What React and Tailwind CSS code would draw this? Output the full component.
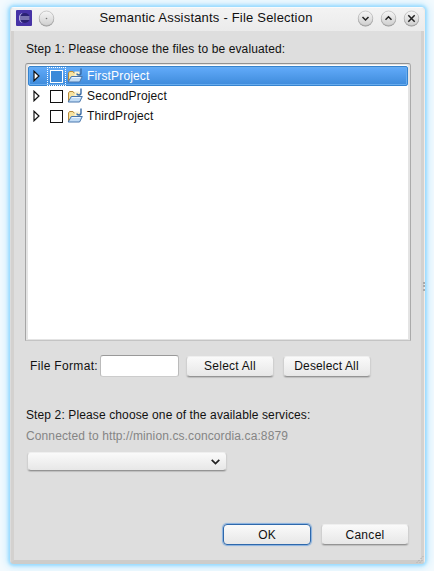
import React from 'react';

const buttonBase =
  'flex h-[21px] w-[88px] shrink-0 items-center justify-center rounded-[4px] border bg-gradient-to-b from-[#fafafa] to-[#e7e7e7]';
const plainButton = 'border-[#d0d0d0] border-t-[#efefef] border-b-[#949494] shadow-[0_1px_1px_#bdbdbd]';

function RoundButton({ d, dot }) {
  return (
    <svg width="17" height="17" viewBox="0 0 17 17" className="shrink-0">
      <defs>
        <linearGradient id="round" x1="0" y1="0" x2="0" y2="1">
          <stop offset="0" stopColor="#f6f6f6" />
          <stop offset="1" stopColor="#cfcfcf" />
        </linearGradient>
      </defs>
      <circle cx="8.5" cy="9" r="7.5" fill="#969696" />
      <circle cx="8.5" cy="8.3" r="7.3" fill="url(#round)" stroke="#b0b0b0" strokeWidth="0.6" />
      {dot ? <circle cx="8.5" cy="8.5" r="0.8" fill="#777" /> : <path d={d} fill="none" stroke="#222" strokeWidth="1.5" />}
    </svg>
  );
}

function AppLogo() {
  return (
    <svg width="16" height="16" viewBox="0 0 16 16" className="shrink-0">
      <rect width="16" height="16" rx="1" fill="#4733a6" />
      <path d="M6.5 3a5.3 5.3 0 0 0 0 10a8 8 0 0 1 0-10z" fill="#c3bfe8" />
      <circle cx="8.8" cy="8" r="5" fill="#2a2173" />
      <path d="M4 7h9.5M4 9h9.5" stroke="#c9c5ee" strokeWidth="1.1" />
    </svg>
  );
}

function Folder() {
  return (
    <svg width="16" height="16" viewBox="0 0 16 16" className="shrink-0">
      <path d="M1.5 13.5V5l1-1.5h3.5l1 1.5h5v4" fill="#f7e3a0" stroke="#b58a3c" />
      <path d="M7.5 3.5h5v4.5h-5z" fill="#fbf3d2" />
      <path d="M14 .5v4.5q0 2-2 2t-2-1.5" fill="none" stroke="#396ba5" strokeWidth="1.4" />
      <path d="M1.2 14L4.3 8.5h11L12.6 14z" fill="#c2dcf5" stroke="#4876ad" />
      <path d="M5 9.5h8.5" stroke="#edf6ff" />
    </svg>
  );
}

function Row({ name, selected }) {
  return (
    <div
      className={`flex h-5 items-center ${
        selected
          ? 'rounded-[2px] border border-[#3583cf] bg-gradient-to-b from-[#62abfa] to-[#3e8bdb] text-white shadow-[inset_0_0_0_1px_#68acef]'
          : 'border border-transparent text-[#111]'
      }`}
    >
      <svg width="8" height="12" viewBox="0 0 8 12" className="ml-1 shrink-0">
        <path d="M1 1.2v9.6L6 6z" fill="#fff" stroke="#111" strokeWidth="1.2" />
      </svg>
      <div
        className={`ml-[6px] flex h-[19px] w-[19px] shrink-0 items-center justify-center ${
          selected ? 'border border-dotted border-white' : ''
        }`}
      >
        <div className={`h-[13px] w-[13px] border ${selected ? 'border-white bg-[#3c8ad9]' : 'border-[#111] bg-white'}`} />
      </div>
      <div className="ml-px flex">
        <Folder />
      </div>
      <span className="ml-[4px] tracking-[0.15px]">{name}</span>
    </div>
  );
}

export default function App() {
  return (
    <div className="h-[571px] w-[434px] overflow-hidden bg-[#f3fafe] pt-[7px] pl-[10px] font-['Liberation_Sans',Arial,sans-serif] text-[12px] leading-[14px] whitespace-nowrap text-[#111]">
      <div className="relative flex h-[557px] w-[415px] flex-col rounded-[4px] border border-t-[#fbfbfb] border-r-[#f3ece7] border-b-[#cdccca] border-l-[#dcdcdc] bg-[#dedede] shadow-[0_0_3px_2px_#9bdcff,0_0_9px_3px_#c5eaff]">
        <div className="flex h-[23px] shrink-0 items-center rounded-t-[3px] bg-gradient-to-b from-[#f3f3f3] to-[#ebebeb] pr-[4px] pb-[3px] pl-[5px]">
          <AppLogo />
          <div className="ml-[6px] flex">
            <RoundButton dot />
          </div>
          <div className="flex-1 text-center text-[13px] tracking-[0.2px]">Semantic Assistants - File Selection</div>
          <div className="flex gap-[6px]">
            <RoundButton d="M5.5 7l3 3l3-3" />
            <RoundButton d="M5.5 9.7l3-3l3 3" />
            <RoundButton d="M5.3 5.3l6.4 6.4M11.7 5.3l-6.4 6.4" />
          </div>
        </div>
        <div className="flex flex-1 flex-col border-x-[3px] border-b-[3px] border-x-[#d3d1cf] border-b-[#cdccca] pl-[11px]">
          <div className="mt-[11px] h-[14px] pl-px tracking-[0.12px]">Step 1: Please choose the files to be evaluated:</div>
          <div className="mt-[7px] h-[278px] w-[386px] shrink-0 rounded-t-[3px] border border-t-[#929292] border-r-[#aaa] border-b-[#c4c4c4] border-l-[#a6a6a6] bg-[#e4e4e4] py-px pr-[2px] pl-[2px]">
            <div className="h-full w-full rounded-t-[2px] bg-white pt-px">
              <Row name="FirstProject" selected />
              <Row name="SecondProject" />
              <Row name="ThirdProject" />
            </div>
          </div>
          <div className="mt-[14px] flex h-[22px] items-center pl-[5px]">
            <span className="w-[70px] tracking-[0.33px]">File Format:</span>
            <div className="h-[22px] w-[79px] rounded-[3px] border border-t-[#999] border-r-[#bbb] border-b-[#ccc] border-l-[#bbb] bg-white" />
            <div className={`${buttonBase} ${plainButton} ml-[7px] tracking-[0.25px]`}>Select All</div>
            <div className={`${buttonBase} ${plainButton} ml-[9px] pr-px tracking-[0.15px]`}>Deselect All</div>
          </div>
          <div className="mt-[31px] h-[14px] pl-px tracking-[0.12px]">Step 2: Please choose one of the available services:</div>
          <div className="mt-[7px] h-[14px] pl-px tracking-[0.11px] text-[#858585]">Connected to http://minion.cs.concordia.ca:8879</div>
          <div
            className={`mt-[9px] ml-[2px] flex h-[19px] w-[200px] items-center justify-end rounded-[4px] border bg-gradient-to-b from-[#fafafa] to-[#e7e7e7] pr-[6px] ${plainButton}`}
          >
            <svg width="9" height="6" viewBox="0 0 9 6">
              <path d="M.7 .8l3.8 3.8L8.3 .8" fill="none" stroke="#222" strokeWidth="1.7" />
            </svg>
          </div>
          <div className="mt-auto mb-[15px] flex justify-end gap-[10px] pr-[12px]">
            <div className={`${buttonBase} border-[#2e68ab] shadow-[0_0_1px_1px_#85b0df]`}>OK</div>
            <div className={`${buttonBase} ${plainButton} tracking-[0.3px]`}>Cancel</div>
          </div>
        </div>
        <div className="absolute top-[274px] right-[-1px] h-[9px] w-[2px] border-l-2 border-dotted border-[#aaa]" />
        <svg width="8" height="8" viewBox="0 0 8 8" className="absolute right-0 bottom-0">
          <path d="M1 7.5L7.5 1M4 7.5L7.5 4" stroke="#999" strokeDasharray="1 1.5" />
        </svg>
      </div>
    </div>
  );
}
